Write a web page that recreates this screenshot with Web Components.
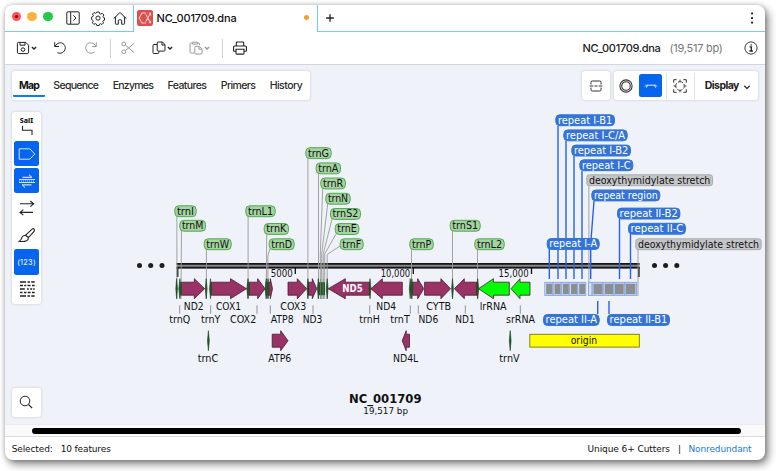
<!DOCTYPE html>
<html lang="en">
<head>
<meta charset="utf-8">
<title>NC_001709.dna</title>
<style>
  body { box-sizing: border-box; height: 100vh; margin: 0; padding: 5px; background: #fff; overflow: hidden; }
</style>
</head>
<body>
<app-window>
  <title-bar></title-bar>
  <tool-bar></tool-bar>
  <map-area></map-area>
  <scroll-track></scroll-track>
  <status-bar></status-bar>
</app-window>

<script>
const ICONS = {
  sidebar: '<rect x=".8" y=".8" width="12.400" height="12.400" rx="1.200"/><path d="M4.700 1v12M7.400 4.400L10 7l-2.600 2.600"/>',
  gear: '<path d="M5.800 1h2.400l.4 1.700 1.100.5 1.500-.9 1.700 1.700-.9 1.500.5 1.100 1 .2v2.400l-1.200.3-.5 1.100.8 1.300-1.600 1.600-1.400-.8-1.100.5-.3 1.300H5.800l-.4-1.400-1.100-.5-1.400.8-1.600-1.600.8-1.400-.5-1.100L.6 8.200V6l1.200-.4.5-1.200-.8-1.400 1.500-1.500 1.400.8 1.100-.4z" stroke-linejoin="round"/><circle cx="7" cy="7.100" r="2.100"/>',
  home: '<path d="M.9 7.400L7 1.500l6.100 5.900M2.400 6v6.500q0 .7.700.7h2.200V9.600q0-.8.8-.8h1.800q.8 0 .8.8v3.600h2.200q.7 0 .7-.7V6" stroke-linejoin="round" stroke-linecap="round"/>',
  plus: '<path d="M7 3.200v7.600M3.200 7h7.600" stroke-width="1.300"/>',
  kebab: '<g fill="currentColor" stroke="none"><rect x="6.100" y="1.500" width="1.900" height="1.900"/><rect x="6.100" y="6.100" width="1.900" height="1.900"/><rect x="6.100" y="10.600" width="1.900" height="1.900"/></g>',
  save: '<path d="M2.400 1.400h7.400l2.800 2.800v7q0 1.400-1.400 1.400H2.800q-1.400 0-1.400-1.400V2.400q0-1 1-1z"/><path d="M4 1.600v2.600h5V1.600"/><circle cx="7" cy="8.600" r="1.800"/>',
  undo: '<path d="M1.700 1.300v4.200h4.200M2 5.300C4.200 1.700 8.300.6 10.900 3.300c2.400 2.600 1.500 6.600-1.300 8.200-1.800 1-3.600.9-5.200.2"/>',
  redo: '<path d="M12.300 1.300v4.200H8.100M12 5.300C9.800 1.700 5.700.6 3.100 3.300.7 5.900 1.600 9.900 4.400 11.500c2.100 1.100 4.300.9 6.100-.6"/>',
  cut: '<circle cx="2.800" cy="3" r="1.900"/><circle cx="2.800" cy="10.800" r="1.900"/><path d="M4.400 4.200l8.800 7.400M4.400 9.600l8.800-7.400"/>',
  copy: '<path d="M5.200 3.500H2q-1 0-1 1v7q0 1 1 1h3.800q1 0 1-1v-1.300M6.200 1h4.200l2.600 2.600v5.500q0 1-1 1H6.200q-1 0-1-1V2q0-1 1-1zM10 1v3h3"/>',
  paste: '<path d="M5 12H2q-1 0-1-1V3q0-1 1-1h2M8 2h1.500q1 0 1 1v1M3.700 1.200h4.600v2H3.700zM6.800 5.400h3.700l2.500 2.500v4.100q0 1-1 1H6.800q-1 0-1-1V6.400q0-1 1-1zM10 5.500v2.700h3"/>',
  print: '<path d="M3.300 5V1.900q0-.9.900-.9h5.600q.9 0 .9.900V5M3 10.200H1.200q-.6 0-.6-.7V6q0-1 1-1h10.800q1 0 1 1v3.500q0 .7-.6.700H11M3 8.200h8v4q0 .9-.9.900H3.900q-.9 0-.9-.9z" stroke-width="1.100"/>',
  info: '<circle cx="7" cy="7" r="6.100" stroke-width=".9"/><path d="M5.600 5.900h1.700v4M5.400 10h3.500M6.500 3.800h1.300" stroke-width="1.300"/>',
  caret: '<path d="M4.900 6.100L7 8l2.100-1.900" stroke-width="1.400"/>',
  chevron: '<path d="M4.300 5.800L7 8.500l2.700-2.700" stroke-width="1.300"/>',
  cutview: '<path d="M2 5.400V3.300q0-1.300 1.300-1.300h7.400q1.300 0 1.300 1.300v2.100M2 8.600v2.100q0 1.300 1.300 1.300h7.400q1.300 0 1.300-1.300V8.600M.7 7h3.600M5.500 7h3M9.700 7h3.600"/>',
  circular: '<circle cx="7" cy="7" r="6.100" stroke-width="1.100"/><circle cx="7" cy="7" r="4.300" stroke-width="1.100"/>',
  linear: '<path d="M1.600 6.200h10.800M2.500 8.600l1-2.300M11.500 8.600l-1-2.300" stroke="#e6f0ff"/><path d="M.6 7.200h1.800M11.600 7.200h1.800" stroke="#8ab8ff"/>',
  fit: '<circle cx="7" cy="7" r="4.300" stroke-dasharray="5.200 1.550" stroke-dashoffset="2.600"/><path d="M.7 3.700v-3h3M10.300.7h3v3M13.300 10.300v3h-3M3.700 13.300h-3v-3M7 .6v1.600M7 11.800v1.600M.6 7h1.600M11.800 7h1.600"/>',
  search: '<circle cx="6" cy="6" r="4.800"/><path d="M9.500 9.500l3.700 3.700" stroke-width="1.200"/>',
  logo: '<rect width="14" height="14" rx="2" fill="#d9504e" stroke="none"/><path d="M8 2.700H4.300L1.900 7l2.400 4.300H8M7.600 3.700l3.700 6.600M11.300 3.700L7.600 10.300M10.300 2.900h1.600v1.900M10.300 11.200h1.600V9.300" stroke="#f7cfcd" stroke-width=".9"/>'
};

// toggles of the left palette use a wider 18x14 box
const PALETTE_ICONS = {
  site: '<path d="M4.500 3.800v4.500h9.500V13" stroke-width="1.100"/>',
  feature: '<path d="M1.200 1.800h10.500L16.800 7l-5.100 5.200H1.200z" stroke="#d6e6ff"/>',
  primer: '<path d="M1 5.500h16M1 8.500h16" stroke="#d4e5ff"/><path d="M1 7h16" stroke="#bcd6ff" stroke-dasharray="1 1"/><path d="M4.500 3.300h9.300L11 .6M13.500 10.900H4.200L7 13.500" stroke="#fff"/>',
  orf: '<path d="M2 2.800h13.500M12.300 0l3.300 2.800-3.300 2.800M15 11.400H2.300M5.300 8.600L2 11.400l3.300 2.800" stroke-width="1.100"/>',
  brush: '<path d="M7.600 7.100l6.500-6q1.200-.9 2 0t.1 2.100L10.600 9.500M7.600 7.100l3 2.400M7.400 7.300q-2.500-.2-3.600 2.300Q3 12.300 1.200 13.300q4.500.7 7.300-.6 2-1.200 1.900-3.100z" stroke-width="1.100"/>',
  sequence: '<path d="M2 0h6M9.500 0h2.500M13.200 0h3.500M2 3.500h3M6.200 3.500h2M9.500 3.500h3M14 3.500h2.700M2 7h4.800M9 7h1.800M12.200 7h2M15.200 7h1.500M2 10.500h2.500M6 10.500h2.500M9.700 10.500h3M14 10.500h2.700M2 14h6M9.500 14h2.500M13.200 14h3.500" stroke-width="1.300"/>'
};

class SvgIcon extends HTMLElement {
  connectedCallback() {
    const name = this.getAttribute('name');
    const wide = name in PALETTE_ICONS;
    this.attachShadow({ mode: 'open' }).innerHTML = `
      <style>
        :host { display: block; flex: none; height: 14px; width: ${wide ? 18 : 14}px; }
        svg { display: block; width: 100%; height: 100%; overflow: visible; }
      </style>
      <svg viewBox="0 0 ${wide ? 18 : 14} 14" fill="none" stroke="currentColor">${wide ? PALETTE_ICONS[name] : ICONS[name]}</svg>`;
  }
}
customElements.define('svg-icon', SvgIcon);

// a label that tracks its letters out or in to fill a given width
class FitLabel extends HTMLElement {
  connectedCallback() {
    this.attachShadow({ mode: 'open' }).innerHTML = `
      <style>
        :host { display: block; flex: none; white-space: nowrap; }
        span { display: inline-block; }
      </style>
      <span><slot></slot></span>`;
    const span = this.shadowRoot.querySelector('span');
    const width = parseFloat(this.getAttribute('width'));
    const natural = span.getBoundingClientRect().width;
    if (natural) span.style.letterSpacing = (width - natural) / this.textContent.length + 'px';
    this.style.width = width + 'px';
  }
}
customElements.define('fit-label', FitLabel);

function define(name, html) {
  const template = document.createElement('template');
  template.innerHTML = html;
  customElements.define(name, class extends HTMLElement {
    constructor() {
      super();
      this.attachShadow({ mode: 'open' });
      this.shadowRoot.appendChild(template.content.cloneNode(true));
    }
  });
}

define('title-bar', `
  <style>
    :host { display: flex; height: 27px; flex: none; color: #222; }
    .left { box-sizing: border-box; width: 129px; display: flex; align-items: center; padding: 0 0 1px 6.500px; border-right: 1px solid #72cdf4; border-bottom: 1px solid #72cdf4; }
    .light { width: 9.600px; height: 9.600px; border-radius: 50%; margin: -2px 6.400px 0 0; display: grid; place-items: center; }
    .light i { width: 3px; height: 3px; border-radius: 50%; background: #7c0c0c; }
    .tab { width: 183px; box-sizing: border-box; display: flex; align-items: center; padding-left: 3px; font: 500 11px Inter, sans-serif; color: #111; }
    .dot { width: 5px; height: 5px; border-radius: 50%; background: #f0a030; margin: -2px 0 0 67.500px; }
    .rest { flex: 1; display: flex; justify-content: space-between; align-items: center; border-left: 1px solid #72cdf4; border-bottom: 1px solid #72cdf4; padding: 0 6px 1px 4.500px; }
  </style>
  <div class="left">
    <div class="light" style="background:#fe5257"><i></i></div>
    <div class="light" style="background:#fdb43f"></div>
    <div class="light" style="background:#26c84b"></div>
    <svg-icon name="sidebar" style="margin-left:6.500px"></svg-icon>
    <svg-icon name="gear" style="margin-left:11px"></svg-icon>
    <svg-icon name="home" style="margin-left:8.500px"></svg-icon>
  </div>
  <div class="tab">
    <svg-icon name="logo" style="width:16px;height:16px;margin:-1px 3.500px 0 0"></svg-icon>
    <fit-label width="80" style="margin-top:-1px">NC_001709.dna</fit-label>
    <div class="dot"></div>
  </div>
  <div class="rest"><svg-icon name="plus"></svg-icon><svg-icon name="kebab"></svg-icon></div>
`);

define('tool-bar', `
  <style>
    :host { box-sizing: border-box; display: flex; align-items: center; flex: none; height: 33px; padding: 0 7px 0 11px; border-bottom: 1px solid #d2d7dc; color: #222; font: 500 11px Inter, sans-serif; }
    .sep { width: 1px; height: 19px; background: #d0d0d0; }
    .off { color: #999; }
    .bp { color: #777; font-weight: 400; margin: 0 21.500px 0 9px; }
  </style>
  <svg-icon name="save"></svg-icon>
  <svg-icon name="caret" style="margin-left:-3.500px"></svg-icon>
  <svg-icon name="undo" style="margin-left:12px"></svg-icon>
  <svg-icon name="redo" class="off" style="margin-left:17.500px"></svg-icon>
  <div class="sep" style="margin-left:11.500px"></div>
  <svg-icon name="cut" class="off" style="margin-left:10.500px"></svg-icon>
  <svg-icon name="copy" style="margin-left:16.500px"></svg-icon>
  <svg-icon name="caret" style="margin-left:-3px"></svg-icon>
  <svg-icon name="paste" class="off" style="margin-left:12.500px"></svg-icon>
  <svg-icon name="caret" class="off" style="margin-left:-3px"></svg-icon>
  <div class="sep" style="margin-left:7.500px"></div>
  <svg-icon name="print" style="margin:0 auto 0 10px"></svg-icon>
  <fit-label width="78">NC_001709.dna</fit-label>
  <fit-label width="53" class="bp">(19,517 bp)</fit-label>
  <svg-icon name="info"></svg-icon>
`);

define('view-tabs', `
  <style>
    :host { box-sizing: border-box; display: flex; width: 298px; height: 29px; padding: 0 0 0 1px; background: #fff; border-radius: 3px; box-shadow: 0 0 3px rgba(0,0,0,.18); font: 500 10.500px/29px Inter, sans-serif; color: #2a2a2a; }
    .on { box-sizing: border-box; width: 32px; padding-left: 6px; font-weight: 700; color: #111; border-bottom: 2.500px solid #067bfb; height: 26px; border-radius: 0 0 1px 1px; margin-right: 8.300px; }
    fit-label { margin-right: 14.400px; }
  </style>
  <div class="on"><fit-label width="20">Map</fit-label></div>
  <fit-label width="45">Sequence</fit-label>
  <fit-label width="40.500">Enzymes</fit-label>
  <fit-label width="38.800">Features</fit-label>
  <fit-label width="34.500">Primers</fit-label>
  <fit-label width="32.700">History</fit-label>
`);

define('view-tools', `
  <style>
    :host { display: flex; gap: 4px; color: #333; }
    .card { box-sizing: border-box; height: 29px; background: #fff; border-radius: 3px; box-shadow: 0 0 3px rgba(0,0,0,.18); display: flex; align-items: center; }
    .one { width: 28px; justify-content: center; }
    .many { width: 144px; padding-left: 5.300px; }
    .on { width: 22.500px; height: 22.500px; border-radius: 2.500px; background: #0565ee; margin: 0 4px 0 6px; display: grid; place-items: center; }
    .sep { width: 1px; height: 26px; background: #e0e3e6; }
    fit-label { font: 700 10.500px Inter, sans-serif; color: #222; margin-left: 9.500px; }
  </style>
  <div class="card one"><svg-icon name="cutview"></svg-icon></div>
  <div class="card many">
    <svg-icon name="circular"></svg-icon>
    <div class="on"><svg-icon name="linear"></svg-icon></div>
    <div class="sep"></div>
    <svg-icon name="fit" style="margin:0 7px 0 6.500px"></svg-icon>
    <div class="sep"></div>
    <fit-label width="34">Display</fit-label>
    <svg-icon name="chevron" style="margin:2px 0 0 1.500px"></svg-icon>
  </div>
`);

define('side-palette', `
  <style>
    :host { box-sizing: border-box; display: grid; grid-template-rows: repeat(7, 25.500px); gap: 1.650px; width: 29px; height: 192px; padding: 1.700px; background: #fff; border-radius: 3px; box-shadow: 0 0 3px rgba(0,0,0,.18); color: #222; }
    div { border-radius: 2.500px; display: grid; place-content: center; justify-items: center; }
    .on { background: #0565ee; color: #e8f1ff; }
    b { font: 800 7px/7px "Noto Sans", sans-serif; color: #111; }
    span { font: 500 7.200px Inter, sans-serif; letter-spacing: .3px; }
  </style>
  <div><b>SalI</b><svg-icon name="site" style="margin-top:-2px"></svg-icon></div>
  <div class="on"><svg-icon name="feature"></svg-icon></div>
  <div class="on"><svg-icon name="primer"></svg-icon></div>
  <div><svg-icon name="orf"></svg-icon></div>
  <div><svg-icon name="brush"></svg-icon></div>
  <div class="on"><span>(123)</span></div>
  <div><svg-icon name="sequence"></svg-icon></div>
`);

// [text, left, top, width, kind]
const TAGS = [
  ['trnI', 174.3, 205.3, 22.4, 'g'], ['trnM', 179.3, 219.8, 26.7, 'g'], ['trnW', 203.7, 238.3, 28, 'g'],
  ['trnL1', 245.3, 205.3, 30.4, 'g'], ['trnK', 263.7, 223, 25.3, 'g'], ['trnD', 268.7, 238.3, 26, 'g'],
  ['trnG', 305.3, 147.2, 26.4, 'g'], ['trnA', 315.7, 162.4, 25.3, 'g'], ['trnR', 320.3, 177.5, 25.6, 'g'],
  ['trnN', 325.3, 192.8, 25.4, 'g'], ['trnS2', 330, 208, 31, 'g'], ['trnE', 334.7, 223.1, 24.7, 'g'],
  ['trnF', 339.7, 238.3, 24, 'g'], ['trnP', 409.3, 238.3, 24.5, 'g'], ['trnS1', 449.7, 219.8, 31, 'g'],
  ['trnL2', 474.3, 238.3, 30.4, 'g'],
  ['repeat I-B1', 555.3, 114.3, 59.7, 'b'], ['repeat I-C/A', 563.3, 129.4, 64.4, 'b'],
  ['repeat I-B2', 571.3, 144.6, 59.7, 'b'], ['repeat I-C', 579.3, 159.3, 54, 'b'],
  ['deoxythymidylate stretch', 586.3, 174.3, 126.7, 'n'], ['repeat region', 591.3, 189.5, 69, 'b'],
  ['repeat II-B2', 617, 207.6, 63.4, 'b'], ['repeat II-C', 628, 222.8, 58, 'b'],
  ['deoxythymidylate stretch', 635.3, 238.3, 126.4, 'n'], ['repeat I-A', 546.7, 238, 53, 'b'],
  ['repeat II-A', 543, 314, 56.7, 'b'], ['repeat II-B1', 607, 314, 63, 'b']
];

const LEADERS = [
  '176.900,216 176.900,299', '181.500,231 181,299', '206.400,249 206.400,299', '248.100,216 248.100,299',
  '266.700,234 266.300,299', '269.700,249 267.900,256 267.900,299', '307.900,158 307.900,299', '318.500,173 318.500,299',
  '322.700,189 320.300,254 320.300,299', '327.700,204 321.700,254 321.700,299', '332,219 323.200,254 323.200,299',
  '336,234 324.700,254 324.700,299', '340,246 327.200,254.500 327.200,299', '411.500,249 411.500,299',
  '452.500,231 452.500,299', '477.500,249 477.500,299', '588.900,185 588.900,296', '638,249 638,296'
];
const REPEAT_LEADERS = [
  '558,126 558,279', '566,141 566,279', '574,156 574,279', '582,171 582,279', '594,201 590.700,244 590.700,279',
  '619.500,219 619.500,279', '630.500,234 630.500,279', '549.300,249 549.300,279', '597.700,301 597.700,314', '609,301 609,314'
];

// [tail, base of the head, tip, y centre, fill]
const ARROWS = [
  [181.300, 194.300, 204.700, 288.7], [211.300, 230.500, 246.500, 288.7], [249, 257.700, 265, 288.7], [268.700, 270.300, 272.500, 288.7],
  [288, 297.300, 306.700, 288.7], [308.500, 312.300, 316.700, 288.7], [369.500, 345.300, 328.300, 288.7], [402.300, 382.300, 370.900, 288.7],
  [412.500, 417.700, 423.800, 288.7], [424.600, 440.900, 450.500, 288.7], [477, 464.300, 454.300, 288.7],
  [509.300, 493.500, 478.500, 288.7, '#0f0'], [530, 520, 511, 288.7, '#0f0'],
  [272.200, 280.700, 288, 340.7], [409.500, 406.200, 402.200, 340.7]
];

// thin tRNA markers: [x, y centre, width]
const SLIVERS = [
  [176.6, 288.7, 1], [179.9, 288.7, 1.6], [206.2, 288.7, 1.2], [210.5, 288.7, 1.4], [248, 288.7, 1.7], [266.2, 288.7, 1.6],
  [268, 288.7, 1.4], [307.9, 288.7, 1.2], [318.3, 288.7, 1.2], [327.2, 288.7, 1.2],
  [370, 288.7, 1.3], [410.2, 288.7, 1.2], [411.9, 288.7, 1.4], [452.5, 288.7, 1.2], [477.7, 288.7, 1.6],
  [208.4, 340.7, 1.2], [510.2, 340.7, 1.2]
];

// tRNA bodies that sit side by side: [x, width]
const BLOCKS = [[179.8, 1.8], [247.3, 2], [265.6, 3], [319, 6], [411.2, 1.4]];

// [text, left, baseline, width]
const NAMES = [
  ['ND2', 183.7, 310, 20], ['COX1', 216, 310, 25], ['COX3', 280.3, 310, 26], ['ND4', 376.3, 310, 19.7], ['CYTB', 426.3, 310, 24.8], ['lrRNA', 479.7, 310, 27],
  ['trnQ', 169.3, 323, 21], ['trnY', 201, 323, 19.5], ['COX2', 230, 323, 26.3], ['ATP8', 270.7, 323, 23], ['ND3', 302.7, 323, 19.7], ['trnH', 359.3, 323, 20.4],
  ['trnT', 390.3, 323, 19.5], ['ND6', 418.5, 323, 19.7], ['ND1', 455.3, 323, 19.4], ['srRNA', 506, 323, 29],
  ['trnC', 197.7, 362, 20.6], ['ATP6', 268.3, 362, 23], ['ND4L', 393, 362, 25.3], ['trnV', 499.3, 362, 20.4],
  ['origin', 570.7, 344, 26.4], ['5000', 270.7, 277, 22], ['10,000', 380.7, 277, 29.5], ['15,000', 498.6, 277, 30],
  ['NC_001709', 349, 402.7, 72.5, 'font-weight="700" font-size="11.500"'], ['19,517 bp', 363.3, 414, 44.7, 'font-size="9"']
];
const STEMS = [179.7, 210.7, 257, 270.3, 313, 369.7, 410.3, 418.3, 465.3, 520.3];

const text = ([t, x, y, w, extra = '']) =>
  `<text x="${x}" y="${y}" textLength="${w}" lengthAdjust="spacingAndGlyphs" ${extra}>${t}</text>`;

function arrow([tail, neck, tip, y, fill = '#993366']) {
  return `<path d="M${tail} ${y - 6.500}H${neck}V${y - 10}L${tip} ${y}L${neck} ${y + 10}V${y + 6.500}H${tail}z" fill="${fill}"/>`;
}

function tag([t, x, y, w, kind]) {
  const [fill, stroke, ink] = { g: ['#a5d3a2', '#4fab50', '#111'], b: ['#3474d8', '#3474d8', '#fff'], n: ['#c4c5c8', '#aaabad', '#111'] }[kind];
  return `<rect x="${x + .5}" y="${y + .5}" width="${w - 1}" height="10.900" rx="${kind === 'n' ? 2.500 : 4}" fill="${fill}" stroke="${stroke}"/>` +
    text([t, x + 2.600, y + 9.300, w - 5.200, `fill="${ink}"`]);
}

class SequenceMap extends HTMLElement {
  connectedCallback() {
    this.attachShadow({ mode: 'open' }).innerHTML = `
      <style>
        :host { display: block; width: 760px; height: 359px; }
        svg { display: block; font: 9.900px "DejaVu Sans", Verdana, sans-serif; }
      </style>
      <svg width="760" height="359" viewBox="5 65 760 359" fill="none">
        <rect x="177" y="263" width="462.500" height="5.500" fill="#85878a"/>
        <path d="M176.500 263.900H639.500M176.500 267.700H639.500" stroke="#161616" stroke-width="1.700"/>
        <path d="M177.600 267v10M638.800 267v10" stroke="#222" stroke-width="1.700"/>
        <path d="M295.300 268v6M413.300 268v6M531.500 268v6" stroke="#111" stroke-width="1.300"/>
        <g fill="#1d1d1f">${[139.5, 150.7, 162, 654.5, 665.6, 676.8].map(x => `<circle cx="${x}" cy="265.600" r="2.500"/>`).join('')}</g>
        <g stroke="#999" stroke-width=".9">${LEADERS.map(p => `<polyline points="${p}"/>`).join('')}</g>
        <g stroke="#4a1733" stroke-width=".8">${ARROWS.map(arrow).join('')}</g>
        <g fill="#1f5a25">${SLIVERS.map(([x, y, w]) => `<path d="M${x} ${y - 10}L${x + w / 2 + .3} ${y}L${x} ${y + 10}L${x - w / 2 - .3} ${y}z" stroke="#143c19" stroke-width=".6"/>`).join('')}</g>
        <g fill="#245529">${BLOCKS.map(([x, w]) => `<rect x="${x}" y="282.200" width="${w}" height="13"/>`).join('')}</g>
        <path d="M320.600 279v20M323.200 279v20" stroke="#6f8a72" stroke-width=".7"/>
        <g stroke="#85aaf3" stroke-width="1" fill="#d9dfed">
          ${[544.8, 553.2, 561.4, 569.6, 577.8].map(x => `<rect x="${x}" y="282.400" width="8" height="13"/>`).join('')}
          <rect x="588.500" y="282.400" width="3.500" height="13"/>
          ${[592.3, 603.3, 614.2, 625].map((x, i) => `<rect x="${x}" y="282.400" width="${i > 2 ? 11.5 : 10.5}" height="13"/>`).join('')}
        </g>
        <g fill="#8a8e91">
          ${[546.2, 554.5, 562.8, 571, 579.2].map(x => `<rect x="${x}" y="283.700" width="6" height="10.500"/>`).join('')}
          ${[593.4, 604.6, 615, 625.7].map((x, i) => `<rect x="${x}" y="283.700" width="${[9, 8.5, 8.7, 9.7][i]}" height="10.500"/>`).join('')}
        </g>
        <g stroke="#2760ef" stroke-width="1.400">${REPEAT_LEADERS.map(p => `<polyline points="${p}"/>`).join('')}</g>
        <path d="${STEMS.map(x => `M${x} 305.300v8.500`).join('')}" stroke="#888" stroke-width=".9"/>
        <rect x="529.800" y="334.300" width="109.500" height="12.800" fill="#ff0" stroke="#77771a" stroke-width=".9"/>
        ${TAGS.map(tag).join('')}
        <g fill="#111">${NAMES.map(text).join('')}</g>
        ${text(['ND5', 342.3, 292.3, 20.5, 'fill="#fff" font-weight="700"'])}
      </svg>`;
  }
}
customElements.define('sequence-map', SequenceMap);

// the map is a canvas with floating panels laid over it
define('map-area', `
  <style>
    :host { display: grid; flex: none; height: 359px; background: #eff3f9; }
    sequence-map, .over { grid-area: 1 / 1; }
    .over { box-sizing: border-box; display: flex; flex-direction: column; align-items: flex-start; padding: 6px 7px 7px; z-index: 1; }
    .top { align-self: stretch; display: flex; justify-content: space-between; margin-bottom: 12px; }
    .find { width: 29px; height: 29px; margin-top: auto; display: grid; place-items: center; background: #fff; border-radius: 3px; box-shadow: 0 0 3px rgba(0,0,0,.18); color: #222; }
  </style>
  <sequence-map></sequence-map>
  <div class="over">
    <div class="top"><view-tabs></view-tabs><view-tools></view-tools></div>
    <side-palette></side-palette>
    <div class="find"><svg-icon name="search" style="margin:-1px 0 0 -1px"></svg-icon></div>
  </div>
`);

define('scroll-track', `
  <style>
    :host { box-sizing: border-box; display: block; flex: none; height: 13px; padding: 2.500px 24px 0 27px; background: #fafafa; border-top: 1px solid #ececec; border-bottom: 1px solid #dedede; }
    div { height: 6.500px; border-radius: 4px; background: #000; }
  </style>
  <div></div>
`);

define('status-bar', `
  <style>
    :host { flex: 1; display: flex; align-items: center; padding: 0 13.500px 0 6.700px; font: 9px "DejaVu Sans", Verdana, sans-serif; color: #111; }
    .mode { color: #1a78d6; }
  </style>
  <fit-label width="41">Selected:</fit-label>
  <fit-label width="50" style="margin:0 auto 0 8px">10 features</fit-label>
  <fit-label width="82.500">Unique 6+ Cutters</fit-label>
  <fit-label width="3" style="margin:0 7.500px 0 8px">|</fit-label>
  <fit-label width="63" class="mode">Nonredundant</fit-label>
`);

define('app-window', `
  <style>
    :host { display: flex; flex-direction: column; width: 760px; height: 455px; border-radius: 8px; overflow: hidden; background: #fff; box-shadow: 0 0 4px rgba(0,0,0,.2), 3px 4px 8px rgba(0,0,0,.5); }
  </style>
  <slot></slot>
`);
</script>
</body>
</html>
